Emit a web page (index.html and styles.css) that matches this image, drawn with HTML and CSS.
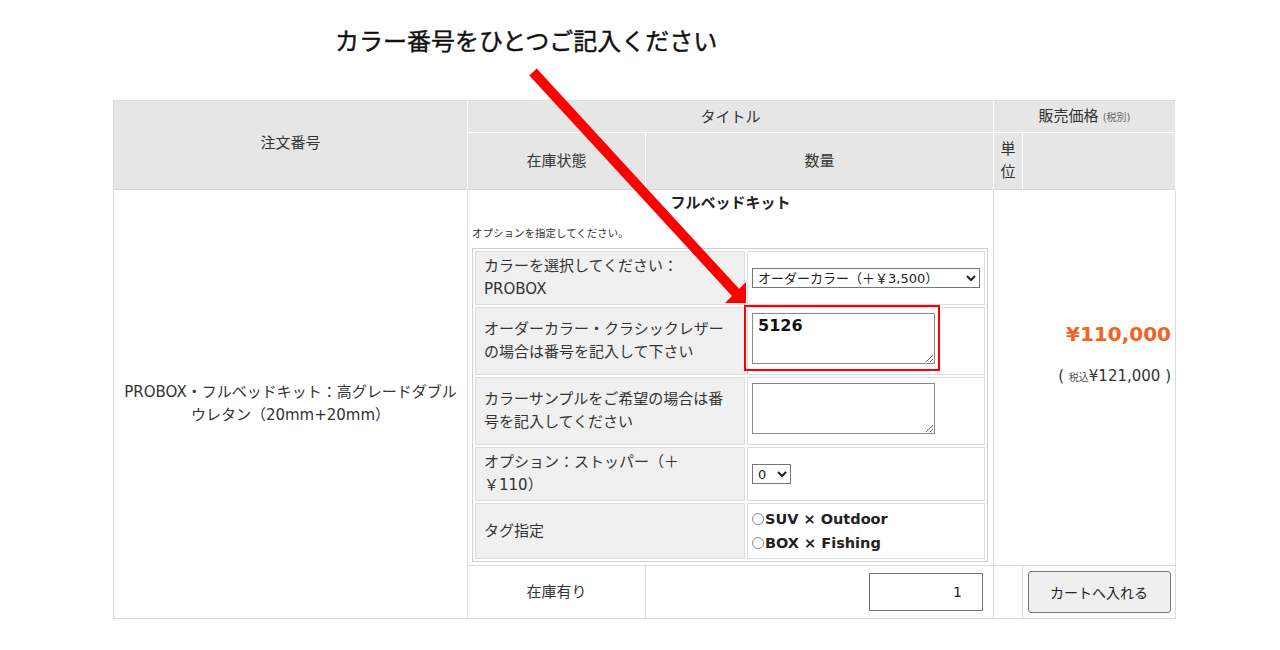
FILE: index.html
```html
<!DOCTYPE html>
<html>
    <head>
        <meta charset="utf-8">
        <link rel="stylesheet" href="styles.css">
        <title>カート</title>
    </head>
    <body>
        <div class="page">
            <p class="callout">カラー番号をひとつご記入ください</p>

            <table class="order">
                <colgroup>
                    <col class="c-name">
                    <col class="c-stock">
                    <col class="c-qty">
                    <col class="c-unit">
                    <col class="c-cart">
                </colgroup>
                <thead>
                    <tr class="top">
                        <th rowspan="2" class="no">注文番号</th>
                        <th colspan="2">タイトル</th>
                        <th colspan="2">販売価格<small>(税別)</small></th>
                    </tr>
                    <tr class="sub">
                        <th>在庫状態</th>
                        <th>数量</th>
                        <th>単位</th>
                        <th></th>
                    </tr>
                </thead>
                <tbody>
                    <tr>
                        <td rowspan="2" class="name">PROBOX・フルベッドキット：高グレードダブルウレタン（20mm+20mm）</td>
                        <td colspan="2" class="item">
                            <div class="item-title">フルベッドキット</div>
                            <div class="item-note">オプションを指定してください。</div>
                            <table class="opts">
                                <tr>
                                    <td class="label">カラーを選択してください：PROBOX</td>
                                    <td class="value">
                                        <select class="color-select">
                                            <option>オーダーカラー（＋￥3,500）</option>
                                        </select>
                                    </td>
                                </tr>
                                <tr>
                                    <td class="label">オーダーカラー・クラシックレザーの場合は番号を記入して下さい</td>
                                    <td class="value">
                                        <div class="marked"><textarea class="memo">5126</textarea></div>
                                    </td>
                                </tr>
                                <tr>
                                    <td class="label">カラーサンプルをご希望の場合は番号を記入してください</td>
                                    <td class="value">
                                        <div class="memo-wrap"><textarea class="memo"></textarea></div>
                                    </td>
                                </tr>
                                <tr>
                                    <td class="label">オプション：ストッパー（＋<br>￥110）</td>
                                    <td class="value">
                                        <select class="num-select">
                                            <option>0</option>
                                        </select>
                                    </td>
                                </tr>
                                <tr>
                                    <td class="label">タグ指定</td>
                                    <td class="value">
                                        <label class="radio"><input type="radio" name="tag">SUV × Outdoor</label>
                                        <label class="radio"><input type="radio" name="tag">BOX × Fishing</label>
                                    </td>
                                </tr>
                            </table>
                        </td>
                        <td colspan="2" class="price">
                            <div class="price-main">¥110,000</div>
                            <div class="price-tax">( <small>税込</small>¥121,000 )</div>
                        </td>
                    </tr>
                    <tr class="buy">
                        <td class="stock">在庫有り</td>
                        <td class="qty"><input type="text" class="qty-input" value="1"></td>
                        <td></td>
                        <td class="cart"><button type="button">カートへ入れる</button></td>
                    </tr>
                </tbody>
            </table>

            <!-- annotation arrow drawn over the table -->
            <svg class="arrow" width="1280" height="650" viewBox="0 0 1280 650">
                <line x1="533" y1="72" x2="737" y2="294" stroke="#ff0000" stroke-width="10"/>
                <polygon points="746,303 725,303 746,282" fill="#ff0000"/>
            </svg>
        </div>
    </body>
</html>
```

FILE: styles.css
```css
body {
    margin: 0;
    color: #333;
    background-color: #fff;
    font-family: "DejaVu Sans", "Noto Sans CJK JP", sans-serif;
    font-size: 15px;
}
.page {
    position: relative;
    height: 650px;
    padding: 26px 0 0 113px;
    box-sizing: border-box;
}
.callout {
    margin: 0 0 46px 222px;
    font-family: "Noto Sans CJK JP", sans-serif;
    font-size: 24px;
    line-height: 28px;
    font-weight: normal;
    -webkit-text-stroke: 0.4px #111;
    color: #111;
}
.arrow {
    position: absolute;
    left: 0;
    top: 0;
    pointer-events: none;
}

/* main order table */
.order {
    width: 1063px;
    table-layout: fixed;
    border-collapse: separate;
    border-spacing: 0;
    border-left: 1px solid #d6d6d6;
    border-top: 1px solid #dedede;
    line-height: 23px;
}
.c-name { width: 354px; }
.c-stock { width: 178px; }
.c-qty { width: 348px; }
.c-unit { width: 29px; }
.c-cart { width: 153px; }
.order th {
    background-color: #e6e6e6;
    font-weight: normal;
    text-align: center;
    padding: 4px 5px 3px;
    border-right: 1px solid #fff;
    border-bottom: 1px solid #fff;
}
.order .sub th {
    padding: 5px;
}
.order .sub th, .order th.no {
    border-bottom-color: #d8d8d8;
}
.order th.no {
    padding-bottom: 8px;
}
.order th small {
    font-size: 10px;
    color: #666;
    margin-left: 4px;
}
.order > tbody > tr > td {
    border-right: 1px solid #dcdcdc;
    border-bottom: 1px solid #dcdcdc;
    vertical-align: middle;
    padding: 4px;
}
.order tr.buy > td {
    padding-top: 5px;
    padding-bottom: 5px;
}
.order td.name {
    text-align: center;
    padding: 4px 5px;
}
.order td.item {
    padding: 2px 4px 3px;
}
.item-title {
    text-align: center;
    font-weight: bold;
    color: #222;
}
.item-note {
    font-size: 10.5px;
    line-height: 16px;
    margin: 10px 0 7px;
}

/* options */
.opts {
    width: 516px;
    border: 1px solid #cfcfcf;
    border-spacing: 2px;
    line-height: 23px;
}
.opts td {
    border: 1px solid #dddddd;
    vertical-align: middle;
}
.opts .label {
    width: 252px;
    padding: 3px 8px;
    background-color: #f0f0f0;
    color: #333;
}
.opts .value {
    padding: 3px 4px;
}
select {
    height: 20px;
    font-family: "DejaVu Sans", "Noto Sans CJK JP", sans-serif;
    font-size: 13px;
    color: #222;
    background-color: #fff;
    border: 1px solid #767676;
    border-radius: 0;
    padding: 0 1px;
}
.color-select {
    width: 228px;
}
.num-select {
    width: 39px;
}
.marked, .memo-wrap {
    position: relative;
    width: 183px;
    margin: 2px 0 7px;
}
.marked::after {
    content: "";
    position: absolute;
    left: -8px;
    right: -5px;
    top: -8px;
    bottom: -7px;
    border: 2px solid #ff0000;
}
.memo {
    display: block;
    width: 183px;
    height: 51px;
    margin: 0;
    box-sizing: border-box;
    padding: 2px 5px;
    border: 1px solid #8a8a8a;
    font-family: "DejaVu Sans", sans-serif;
    font-size: 16px;
    font-weight: bold;
    color: #111;
}
.radio {
    display: block;
    font-size: 14.5px;
    font-weight: bold;
    line-height: 24px;
    color: #222;
}
.radio input {
    appearance: none;
    width: 12px;
    height: 12px;
    margin: 0 1px 0 0;
    border: 1px solid #8a8a8a;
    border-radius: 50%;
    vertical-align: -1px;
}

/* price */
.order td.price {
    text-align: right;
    padding: 4px 4px 4px;
}
.price-main {
    font-size: 20px;
    font-weight: bold;
    line-height: 30px;
    color: #f0641e;
}
.price-tax {
    margin-top: 16px;
    padding-bottom: 48px;
}
.price-tax small {
    font-size: 10px;
    color: #555;
}

/* bottom row */
.order td.stock {
    text-align: center;
}
.order td.qty {
    text-align: right;
    padding-right: 10px;
}
.qty-input {
    width: 114px;
    height: 38px;
    box-sizing: border-box;
    border: 1px solid #767676;
    padding: 0 20px;
    text-align: right;
    font-family: "DejaVu Sans", sans-serif;
    font-size: 14px;
    color: #222;
    vertical-align: middle;
}
.order td.cart {
    text-align: center;
}
.cart button {
    width: 143px;
    height: 42px;
    font-family: "Noto Sans CJK JP", sans-serif;
    font-size: 14px;
    color: #222;
    background-color: #efefef;
    border: 1px solid #767676;
    border-radius: 3px;
    vertical-align: middle;
}
```
